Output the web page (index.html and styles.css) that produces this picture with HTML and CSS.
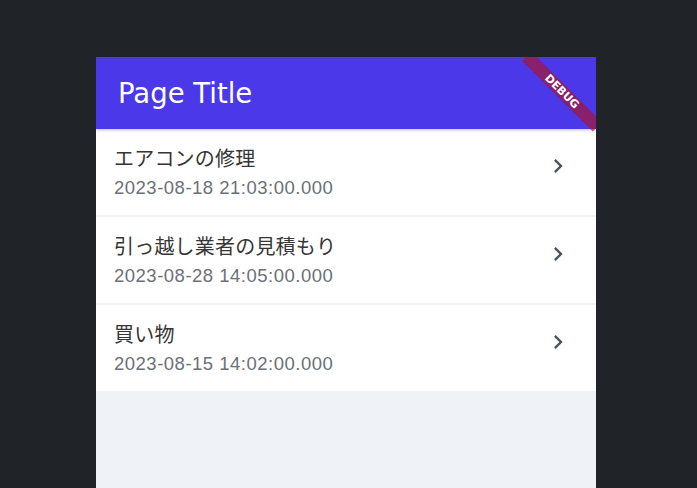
FILE: index.html
```html
<!DOCTYPE html>
<html>
<head>
	<meta charset="utf-8">
	<meta name="viewport" content="width=device-width, initial-scale=1">
	<title>Page Title</title>
	<link rel="stylesheet" href="styles.css">
</head>
<body>

<div class="phone">
	<header class="appbar">
		<h1 class="title">Page Title</h1>
	</header>

	<ul class="list">
		<li class="item">
			<div class="text">
				<div class="name">エアコンの修理</div>
				<div class="date">2023-08-18 21:03:00.000</div>
			</div>
			<svg class="chevron" viewBox="0 0 24 24"><path d="M10 6L8.59 7.41 13.17 12l-4.58 4.59L10 18l6-6z"/></svg>
		</li>
		<li class="item">
			<div class="text">
				<div class="name">引っ越し業者の見積もり</div>
				<div class="date">2023-08-28 14:05:00.000</div>
			</div>
			<svg class="chevron" viewBox="0 0 24 24"><path d="M10 6L8.59 7.41 13.17 12l-4.58 4.59L10 18l6-6z"/></svg>
		</li>
		<li class="item">
			<div class="text">
				<div class="name">買い物</div>
				<div class="date">2023-08-15 14:02:00.000</div>
			</div>
			<svg class="chevron" viewBox="0 0 24 24"><path d="M10 6L8.59 7.41 13.17 12l-4.58 4.59L10 18l6-6z"/></svg>
		</li>
	</ul>

	<div class="debug">DEBUG</div>
</div>

</body>
</html>
```

FILE: styles.css
```css
html {
	font-family: "Liberation Sans", "Noto Sans CJK JP", sans-serif;
}

body {
	margin: 0;
	height: 488px;
	overflow: hidden;
	background-color: #202428;
}

.phone {
	position: relative;
	overflow: hidden;
	margin: 57px 0 0 96px;
	width: 500px;
	height: 431px;
	background-color: #eff3f7;
}

.appbar {
	position: relative;
	z-index: 1;
	height: 72px;
	display: flex;
	align-items: center;
	padding-left: 22px;
	background-color: #4b38e9;
	box-shadow: 0 1px 3px rgba(0, 0, 0, .25);
}

.title {
	margin: 0;
	font-family: "DejaVu Sans", sans-serif;
	font-size: 27.5px;
	font-weight: 400;
	color: #fff;
}

.list {
	margin: 0;
	padding: 0;
	list-style: none;
	display: flex;
	flex-direction: column;
	gap: 2px;
}

.item {
	height: 86px;
	box-sizing: border-box;
	display: flex;
	align-items: flex-start;
	padding: 15px 24px 0 18px;
	background-color: #fff;
}

.text {
	flex: 1;
}

.name {
	font-family: "Noto Sans CJK JP", sans-serif;
	font-size: 20px;
	letter-spacing: .2px;
	line-height: 28px;
	color: #363636;
}

.date {
	font-size: 18.5px;
	letter-spacing: .5px;
	line-height: 31px;
	color: #6b7078;
}

.chevron {
	width: 28px;
	height: 28px;
	margin-top: 8px;
	fill: #4b5260;
}

.debug {
	position: absolute;
	z-index: 2;
	top: 28px;
	right: -16px;
	width: 100px;
	height: 13px;
	transform: rotate(45deg);
	background-color: rgba(170, 20, 40, .66);
	color: #fff;
	font-family: "DejaVu Sans", sans-serif;
	font-size: 11px;
	font-weight: 700;
	line-height: 13px;
	text-align: center;
}
```
